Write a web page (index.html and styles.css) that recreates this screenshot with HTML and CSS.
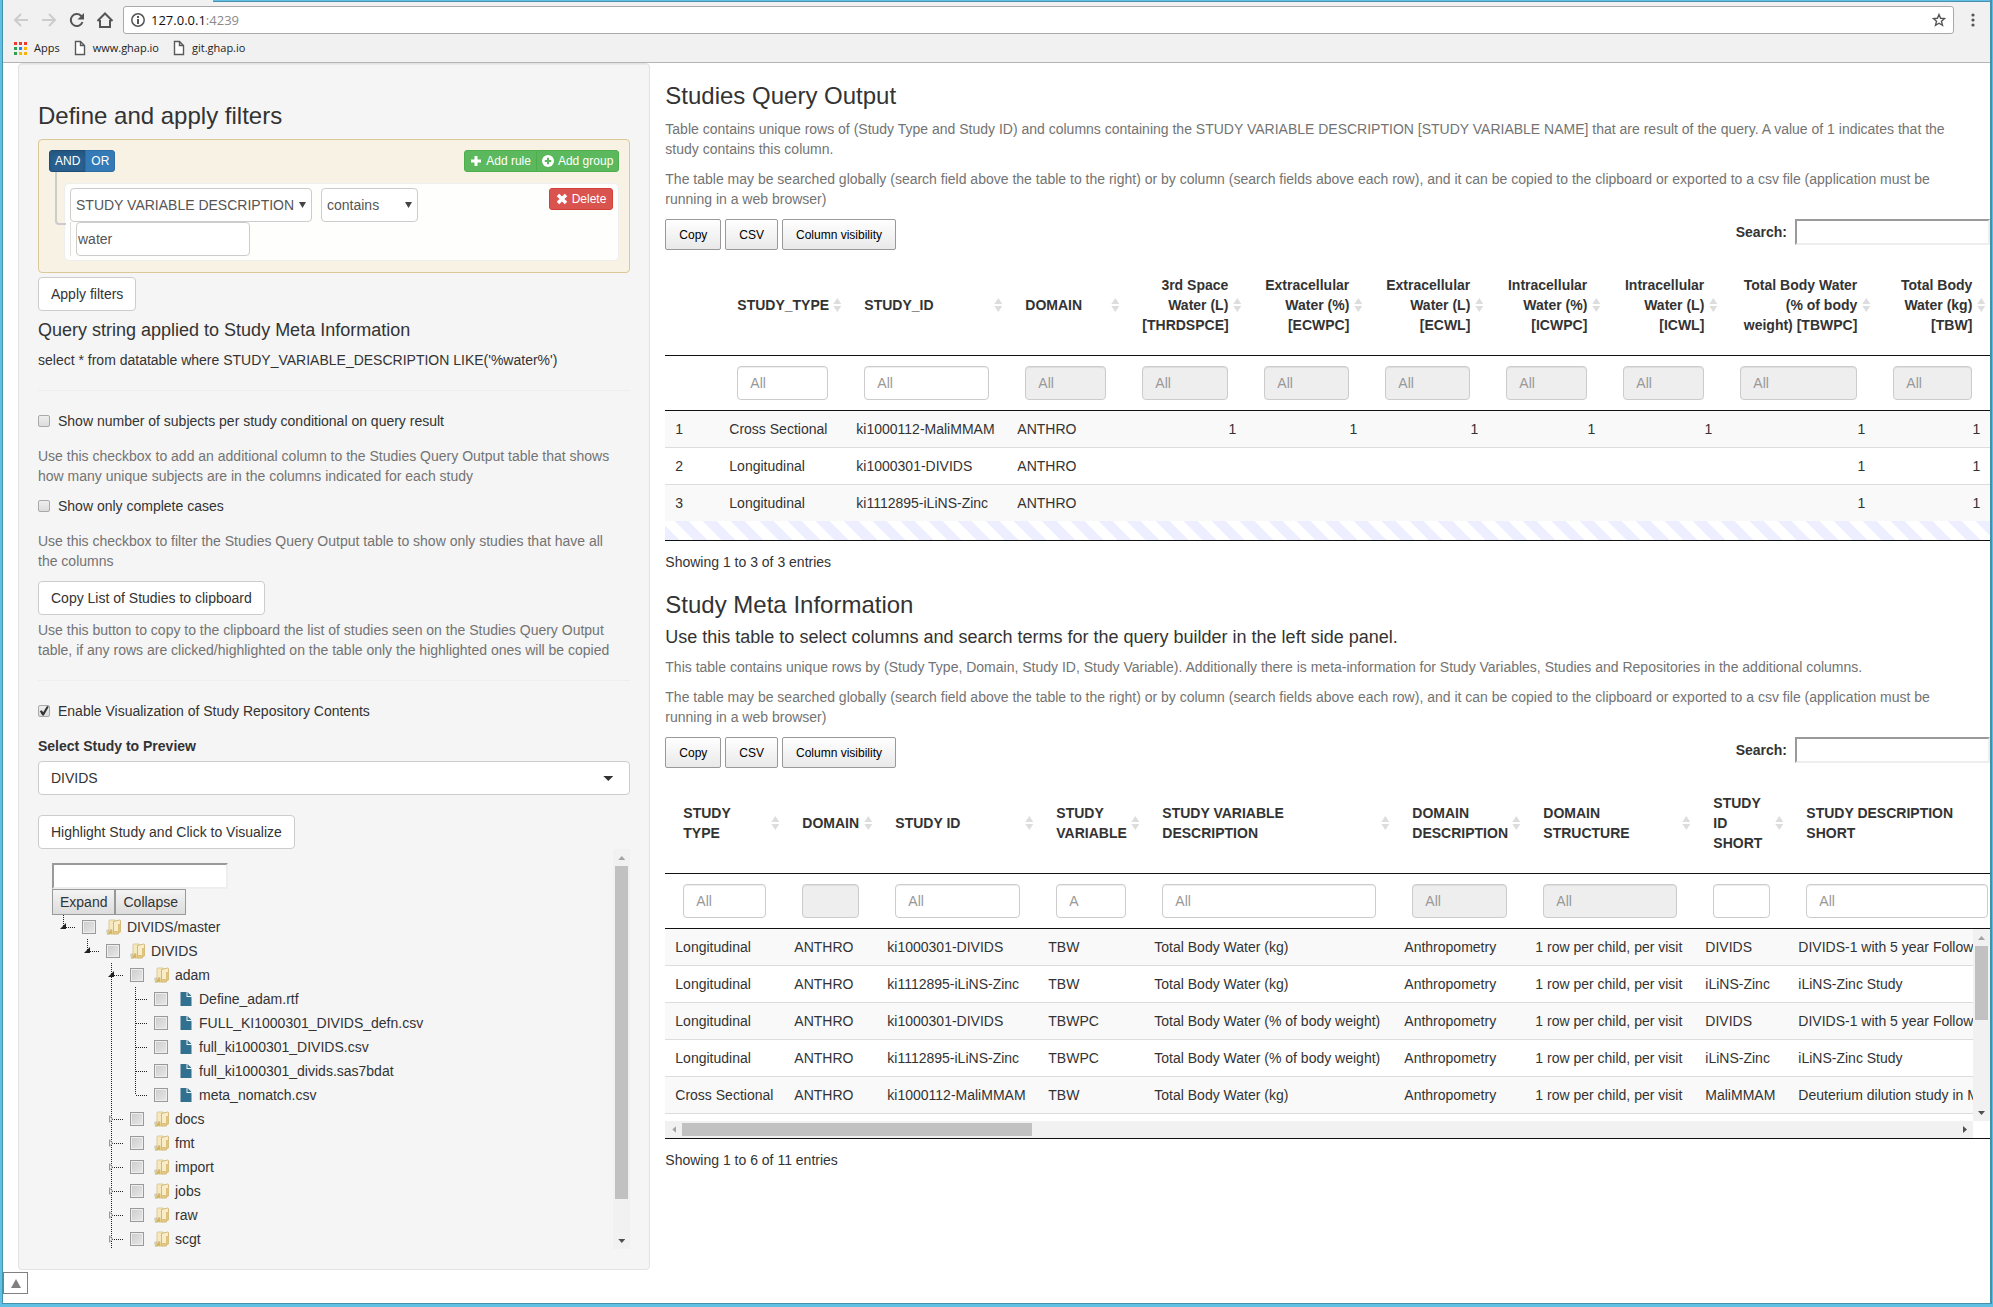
FILE: index.html
```html
<!DOCTYPE html>
<html lang="en">
<head>
<meta charset="utf-8">
<title>Studies Query</title>
<link rel="stylesheet" href="styles.css">
</head>
<body>
<svg class="defs" aria-hidden="true">
  <symbol id="folder" viewBox="0 0 16 16">
    <path d="M0 11l3-1v6H1z" fill="#d2cfc6"/>
    <path d="M3 2q0-1 1-1h5v14H2q1-2 1-4z" fill="#f6e9bd" stroke="#d2bb80" stroke-width=".7"/>
    <path d="M7.500 2.500l6-1.500q1 0 1 1v11l-2 1v1h-5z" fill="#f8edc8" stroke="#c9ac66" stroke-width=".8"/>
    <path d="M12 5h2.500v8l-2.500 1z" fill="#dfc37f"/>
    <path d="M7.500 12h5v3h-5z" fill="#e0c47c"/>
    <path d="M2 15l2.500-5 2 1v4z" fill="#d4b566"/>
  </symbol>
  <symbol id="file" viewBox="0 0 11 14">
    <path d="M0 0h6v5h5v9H0z" fill="#31708f"/>
    <path d="M7 0l4 4H7z" fill="#31708f"/>
  </symbol>
  <symbol id="page" viewBox="0 0 12 16">
    <path d="M1.500 1.500h5l4 4v9h-9zM6.500 1.500v4h4" fill="#fff" stroke="#5a5a5a" stroke-width="1.400"/>
  </symbol>
</svg>
<div class="window">
  <header class="chrome">
    <div class="tab-edge"></div>
    <div class="toolbar">
      <button class="nav" aria-label="Back"><svg width="16" height="16" viewBox="0 0 16 16" fill="none" stroke="#ccc" stroke-width="2"><path d="M15 8H2M8 2L2 8l6 6"/></svg></button>
      <button class="nav" aria-label="Forward"><svg width="16" height="16" viewBox="0 0 16 16" fill="none" stroke="#ccc" stroke-width="2"><path d="M1 8h13M8 2l6 6-6 6"/></svg></button>
      <button class="nav" aria-label="Reload"><svg width="16" height="16" viewBox="0 0 16 16" fill="none" stroke="#555" stroke-width="2"><path d="M13.500 10A6 6 0 1 1 12 3.700L13.500 5.500"/><path d="M15 1v6.500H8.500z" fill="#555" stroke="none"/></svg></button>
      <button class="nav" aria-label="Home"><svg width="18" height="16" viewBox="0 0 18 16" fill="none" stroke="#555" stroke-width="2"><path d="M1.500 9L9 1.500 16.500 9M4 8v7h10V8"/></svg></button>
      <div class="address">
        <svg width="14" height="14" viewBox="0 0 14 14" fill="none" stroke="#555" stroke-width="1.500"><circle cx="7" cy="7" r="6.200"/><path d="M7 6v5M7 3v2" stroke-width="2"/></svg>
        <span class="url">127.0.0.1<span class="port">:4239</span></span>
        <svg width="14" height="14" viewBox="0 0 14 14" fill="none" stroke="#555" stroke-width="1.400"><path d="M7 1.500l1.600 3.800 4 .3-3.100 2.700 1 4L7 10.200l-3.500 2.100 1-4L1.400 5.600l4-.3z"/></svg>
      </div>
      <button class="nav menu" aria-label="Menu"><svg width="4" height="14" viewBox="0 0 4 14" fill="#555"><circle cx="2" cy="2" r="1.600"/><circle cx="2" cy="7" r="1.600"/><circle cx="2" cy="12" r="1.600"/></svg></button>
    </div>
    <nav class="bookmarks">
      <a href="#"><svg width="13" height="13" viewBox="0 0 13 13"><path d="M0 0h3v3H0zM5 0h3v3H5zM10 0h3v3h-3z" fill="#f03a2e"/><path d="M0 5h3v3H0zM0 10h3v3H0z" fill="#2ba24c"/><path d="M5 5h3v3H5z" fill="#1b87f0"/><path d="M10 5h3v3h-3zM5 10h3v3H5zM10 10h3v3h-3z" fill="#fbb300"/></svg>Apps</a>
      <a href="#"><svg width="12" height="16"><use href="#page"/></svg>www.ghap.io</a>
      <a href="#"><svg width="12" height="16"><use href="#page"/></svg>git.ghap.io</a>
    </nav>
  </header>

  <div class="page">
    <aside class="side">
      <div class="well">
        <h3>Define and apply filters</h3>
        <div class="group">
          <div class="group-head">
            <div class="btn-group"><button class="xs primary active">AND</button><button class="xs primary">OR</button></div>
            <div class="btn-group">
              <button class="xs success"><svg width="12" height="12" viewBox="0 0 12 12" fill="#fff"><path d="M4.500 1h3v3.500H11v3H7.500V11h-3V7.500H1v-3h3.500z"/></svg>Add rule</button><button class="xs success"><svg width="12" height="12" viewBox="0 0 12 12"><circle cx="6" cy="6" r="6" fill="#fff"/><path d="M6 2.800v6.400M2.800 6h6.400" stroke="#5cb85c" stroke-width="2"/></svg>Add group</button>
            </div>
          </div>
          <div class="rules">
            <div class="rule">
              <div class="rule-fields">
                <div class="rule-selects">
                  <span class="pick pick-field"><select aria-label="Field"><option>STUDY VARIABLE DESCRIPTION</option></select></span>
                  <span class="pick pick-op"><select aria-label="Operator"><option>contains</option></select></span>
                </div>
                <div class="rule-value"><input type="text" value="water" aria-label="Value"></div>
              </div>
              <button class="xs danger"><svg width="12" height="12" viewBox="0 0 12 12"><path d="M2 2l8 8M10 2l-8 8" stroke="#fff" stroke-width="3.500"/></svg>Delete</button>
            </div>
          </div>
        </div>
        <button class="btn">Apply filters</button>
        <h4>Query string applied to Study Meta Information</h4>
        <div>select * from datatable where STUDY_VARIABLE_DESCRIPTION LIKE('%water%')</div>
        <hr>
        <label class="check"><input type="checkbox">Show number of subjects per study conditional on query result</label>
        <p class="help">Use this checkbox to add an additional column to the Studies Query Output table that shows how many unique subjects are in the columns indicated for each study</p>
        <label class="check"><input type="checkbox">Show only complete cases</label>
        <p class="help">Use this checkbox to filter the Studies Query Output table to show only studies that have all the columns</p>
        <button class="btn">Copy List of Studies to clipboard</button>
        <p class="help help-tight">Use this button to copy to the clipboard the list of studies seen on the Studies Query Output table, if any rows are clicked/highlighted on the table only the highlighted ones will be copied</p>
        <hr>
        <label class="check"><input type="checkbox" checked>Enable Visualization of Study Repository Contents</label>
        <label class="title" for="study">Select Study to Preview</label>
        <span class="pick pick-study"><select id="study"><option>DIVIDS</option></select></span>
        <button class="btn">Highlight Study and Click to Visualize</button>

        <div class="tree-box">
          <div class="tree-pane">
            <input class="tree-search" type="text" aria-label="Search tree">
            <div class="tree-buttons"><button>Expand</button><button>Collapse</button></div>
            <ul class="tree">
              <li class="open"><label><input type="checkbox"><svg width="16" height="16"><use href="#folder"/></svg>DIVIDS/master</label>
                <ul>
                  <li class="open"><label><input type="checkbox"><svg width="16" height="16"><use href="#folder"/></svg>DIVIDS</label>
                    <ul>
                      <li class="open"><label><input type="checkbox"><svg width="16" height="16"><use href="#folder"/></svg>adam</label>
                        <ul>
                          <li><label><input type="checkbox"><svg width="11" height="14"><use href="#file"/></svg>Define_adam.rtf</label></li>
                          <li><label><input type="checkbox"><svg width="11" height="14"><use href="#file"/></svg>FULL_KI1000301_DIVIDS_defn.csv</label></li>
                          <li><label><input type="checkbox"><svg width="11" height="14"><use href="#file"/></svg>full_ki1000301_DIVIDS.csv</label></li>
                          <li><label><input type="checkbox"><svg width="11" height="14"><use href="#file"/></svg>full_ki1000301_divids.sas7bdat</label></li>
                          <li><label><input type="checkbox"><svg width="11" height="14"><use href="#file"/></svg>meta_nomatch.csv</label></li>
                        </ul>
                      </li>
                      <li class="closed"><label><input type="checkbox"><svg width="16" height="16"><use href="#folder"/></svg>docs</label></li>
                      <li class="closed"><label><input type="checkbox"><svg width="16" height="16"><use href="#folder"/></svg>fmt</label></li>
                      <li class="closed"><label><input type="checkbox"><svg width="16" height="16"><use href="#folder"/></svg>import</label></li>
                      <li class="closed"><label><input type="checkbox"><svg width="16" height="16"><use href="#folder"/></svg>jobs</label></li>
                      <li class="closed"><label><input type="checkbox"><svg width="16" height="16"><use href="#folder"/></svg>raw</label></li>
                      <li class="closed more"><label><input type="checkbox"><svg width="16" height="16"><use href="#folder"/></svg>scgt</label></li>
                    </ul>
                  </li>
                </ul>
              </li>
            </ul>
          </div>
          <div class="vbar"><i class="up"></i><div class="track"><b class="thumb-tree"></b></div><i class="down"></i></div>
        </div>
      </div>
      <button class="to-top" aria-label="Back to top"><svg width="10" height="9" viewBox="0 0 10 9"><path d="M5 0l5 9H0z" fill="#808080"/></svg></button>
    </aside>

    <main class="main">
      <section>
        <h3>Studies Query Output</h3>
        <p class="help">Table contains unique rows of (Study Type and Study ID) and columns containing the STUDY VARIABLE DESCRIPTION [STUDY VARIABLE NAME] that are result of the query. A value of 1 indicates that the study contains this column.</p>
        <p class="help">The table may be searched globally (search field above the table to the right) or by column (search fields above each row), and it can be copied to the clipboard or exported to a csv file (application must be running in a web browser)</p>
        <div class="dt-bar">
          <button>Copy</button><button>CSV</button><button>Column visibility</button>
          <label>Search:<input type="search"></label>
        </div>
        <table class="dt studies">
          <thead>
            <tr><th></th><th class="sort">STUDY_TYPE</th><th class="sort">STUDY_ID</th><th class="sort">DOMAIN</th><th class="sort num">3rd Space Water (L) [THRDSPCE]</th><th class="sort num">Extracellular Water (%) [ECWPC]</th><th class="sort num">Extracellular Water (L) [ECWL]</th><th class="sort num">Intracellular Water (%) [ICWPC]</th><th class="sort num">Intracellular Water (L) [ICWL]</th><th class="sort num">Total Body Water (% of body weight) [TBWPC]</th><th class="sort num">Total Body Water (kg) [TBW]</th></tr>
            <tr class="filters"><td></td><td><input placeholder="All" aria-label="Filter"></td><td><input placeholder="All" aria-label="Filter"></td><td><input placeholder="All" aria-label="Filter" disabled></td><td><input placeholder="All" aria-label="Filter" disabled></td><td><input placeholder="All" aria-label="Filter" disabled></td><td><input placeholder="All" aria-label="Filter" disabled></td><td><input placeholder="All" aria-label="Filter" disabled></td><td><input placeholder="All" aria-label="Filter" disabled></td><td><input placeholder="All" aria-label="Filter" disabled></td><td><input placeholder="All" aria-label="Filter" disabled></td></tr>
          </thead>
          <tbody>
            <tr><td>1</td><td>Cross Sectional</td><td>ki1000112-MaliMMAM</td><td>ANTHRO</td><td class="num">1</td><td class="num">1</td><td class="num">1</td><td class="num">1</td><td class="num">1</td><td class="num">1</td><td class="num">1</td></tr>
            <tr><td>2</td><td>Longitudinal</td><td>ki1000301-DIVIDS</td><td>ANTHRO</td><td></td><td></td><td></td><td></td><td></td><td class="num">1</td><td class="num">1</td></tr>
            <tr><td>3</td><td>Longitudinal</td><td>ki1112895-iLiNS-Zinc</td><td>ANTHRO</td><td></td><td></td><td></td><td></td><td></td><td class="num">1</td><td class="num">1</td></tr>
          </tbody>
        </table>
        <div class="stripes"></div>
        <div class="info">Showing 1 to 3 of 3 entries</div>
      </section>

      <section>
        <h3>Study Meta Information</h3>
        <h4>Use this table to select columns and search terms for the query builder in the left side panel.</h4>
        <p class="help">This table contains unique rows by (Study Type, Domain, Study ID, Study Variable). Additionally there is meta-information for Study Variables, Studies and Repositories in the additional columns.</p>
        <p class="help">The table may be searched globally (search field above the table to the right) or by column (search fields above each row), and it can be copied to the clipboard or exported to a csv file (application must be running in a web browser)</p>
        <div class="dt-bar">
          <button>Copy</button><button>CSV</button><button>Column visibility</button>
          <label>Search:<input type="search"></label>
        </div>
        <div class="clip">
          <table class="dt meta">
            <thead>
              <tr><th class="sort">STUDY TYPE</th><th class="sort">DOMAIN</th><th class="sort">STUDY ID</th><th class="sort">STUDY VARIABLE</th><th class="sort">STUDY VARIABLE DESCRIPTION</th><th class="sort">DOMAIN DESCRIPTION</th><th class="sort">DOMAIN STRUCTURE</th><th class="sort">STUDY ID SHORT</th><th class="sort">STUDY DESCRIPTION SHORT</th></tr>
              <tr class="filters"><td><input placeholder="All" aria-label="Filter"></td><td><input aria-label="Filter" disabled></td><td><input placeholder="All" aria-label="Filter"></td><td><input placeholder="A" aria-label="Filter"></td><td><input placeholder="All" aria-label="Filter"></td><td><input placeholder="All" aria-label="Filter" disabled></td><td><input placeholder="All" aria-label="Filter" disabled></td><td><input aria-label="Filter"></td><td><input placeholder="All" aria-label="Filter"></td></tr>
            </thead>
          </table>
        </div>
        <div class="scroller">
          <div class="clip rows">
            <table class="dt meta">
              <tbody>
                <tr><td>Longitudinal</td><td>ANTHRO</td><td>ki1000301-DIVIDS</td><td>TBW</td><td>Total Body Water (kg)</td><td>Anthropometry</td><td>1 row per child, per visit</td><td>DIVIDS</td><td>DIVIDS-1 with 5 year Follow-up</td></tr>
                <tr><td>Longitudinal</td><td>ANTHRO</td><td>ki1112895-iLiNS-Zinc</td><td>TBW</td><td>Total Body Water (kg)</td><td>Anthropometry</td><td>1 row per child, per visit</td><td>iLiNS-Zinc</td><td>iLiNS-Zinc Study</td></tr>
                <tr><td>Longitudinal</td><td>ANTHRO</td><td>ki1000301-DIVIDS</td><td>TBWPC</td><td>Total Body Water (% of body weight)</td><td>Anthropometry</td><td>1 row per child, per visit</td><td>DIVIDS</td><td>DIVIDS-1 with 5 year Follow-up</td></tr>
                <tr><td>Longitudinal</td><td>ANTHRO</td><td>ki1112895-iLiNS-Zinc</td><td>TBWPC</td><td>Total Body Water (% of body weight)</td><td>Anthropometry</td><td>1 row per child, per visit</td><td>iLiNS-Zinc</td><td>iLiNS-Zinc Study</td></tr>
                <tr><td>Cross Sectional</td><td>ANTHRO</td><td>ki1000112-MaliMMAM</td><td>TBW</td><td>Total Body Water (kg)</td><td>Anthropometry</td><td>1 row per child, per visit</td><td>MaliMMAM</td><td>Deuterium dilution study in Mali</td></tr>
                <tr><td></td><td></td><td></td><td></td><td></td><td></td><td></td><td></td><td></td></tr>
              </tbody>
            </table>
          </div>
          <div class="vbar"><i class="up"></i><div class="track"><b class="thumb-rows"></b></div><i class="down"></i></div>
          <div class="hbar"><i class="left"></i><div class="track"><b class="thumb-cols"></b></div><i class="right"></i></div>
        </div>
        <div class="info">Showing 1 to 6 of 11 entries</div>
      </section>
    </main>
  </div>
</div>
</body>
</html>
```
FILE: styles.css
```css
* { box-sizing: border-box; }
body {
  margin: 0;
  background: #5fc0e3;
  color: #333;
  font: 14px/20px "Liberation Sans", Arial, sans-serif;
}
button, input, select { font: inherit; color: inherit; margin: 0; }
svg { display: block; flex: none; }
.defs { position: absolute; width: 0; height: 0; }
h3, h4 { font-weight: 400; margin: 20px 0 10px; }
h3 { font-size: 24px; line-height: 26px; }
h4 { font-size: 18px; line-height: 19px; margin: 10px 0; }
hr { border: 0; border-top: 1px solid #eee; margin: 20px 0; }
.help { margin: 0 0 10px; padding-right: 15px; color: #737373; }

.window {
  display: flex;
  flex-direction: column;
  min-height: calc(100vh - 3px);
  margin: 0 1px 0 2px;
  border: 1px solid #4590ab;
  border-right-width: 2px;
  border-top: 0;
  background: #fff;
}

/* browser bars */
.chrome {
  background: #f1f1f1;
  border-bottom: 1px solid #b4b4b4;
  font: 12px/16px "Open Sans", "Noto Sans", sans-serif;
  color: #222;
}
.tab-edge { height: 2px; margin-left: 210px; background: #5fc0e3; border-bottom: 1px solid #4e8fae; }
.toolbar { display: flex; align-items: center; padding: 4px 13px 2px 4px; height: 34px; }
.nav { display: flex; justify-content: center; width: 28px; padding: 0; border: 0; background: none; }
.menu { width: 8px; }
.address {
  display: flex;
  flex: 1;
  align-items: center;
  gap: 6px;
  height: 28px;
  margin: 0 15px 0 4px;
  padding: 0 7px;
  border: 1px solid #a9a9a9;
  border-radius: 3px;
  background: #fff;
  font-size: 13px;
}
.url { flex: 1; color: #111; }
.port { color: #8a8a8a; }
.bookmarks { display: flex; gap: 14px; height: 26px; padding: 0 11px 2px; align-items: center; font-size: 11px; }
.bookmarks a { display: flex; align-items: center; gap: 7px; color: inherit; text-decoration: none; }

.page { display: flex; align-items: flex-start; }
.side { flex: 0 0 33.333%; padding: 0 15px; min-width: 0; }
.main { flex: 1; min-width: 0; }
.well {
  padding: 19px 19px 20px;
  border: 1px solid #e3e3e3;
  border-radius: 4px;
  background: #f5f5f5;
  box-shadow: inset 0 1px 1px rgba(0, 0, 0, .05);
}
.well .help { padding-right: 8px; }

/* buttons */
.btn {
  display: block;
  height: 34px;
  padding: 6px 12px;
  border: 1px solid #ccc;
  border-radius: 4px;
  background: #fff;
}
.xs {
  display: flex;
  align-items: center;
  gap: 4px;
  height: 22px;
  padding: 0 5px;
  border: 1px solid;
  border-radius: 3px;
  color: #fff;
  font-size: 12px;
  white-space: nowrap;
}
.btn-group { display: flex; }
.btn-group .xs:first-child { border-radius: 3px 0 0 3px; }
.btn-group .xs:last-child { border-radius: 0 3px 3px 0; margin-left: -1px; }
.primary { background: #337ab7; border-color: #2e6da4; }
.primary.active { background: #286090; border-color: #204d74; box-shadow: inset 0 3px 5px rgba(0, 0, 0, .125); }
.success { background: #5cb85c; border-color: #4cae4c; }
.danger { padding: 0 6px; background: #d9534f; border-color: #d43f3a; }

/* query builder */
.group { padding: 10px 10px 11px; margin-bottom: 4px; border: 1px solid #dcc896; border-radius: 4px; background: #f7f2e4; }
.group-head { display: flex; justify-content: space-between; }
.rules { position: relative; padding: 11px 0 0 15px; }
.rules::before {
  content: "";
  position: absolute;
  left: 6px;
  top: 0;
  width: 9px;
  height: 51px;
  border: solid #ccc;
  border-width: 0 0 2px 2px;
  border-radius: 0 0 0 4px;
}
.rule {
  display: flex;
  justify-content: space-between;
  align-items: flex-start;
  padding: 4px 5px;
  border: 1px solid #eee;
  border-radius: 5px;
  background: #fefefc;
}
.rule-selects { display: flex; gap: 9px; }
.rule-value { padding-left: 5px; border-left: 1px solid #ddd; }
.rule-value input { display: block; width: 174px; height: 34px; padding: 1px; border: 1px solid #ccc; border-radius: 4px; background: #fff; color: #555; }

.pick { display: block; position: relative; }
.pick select {
  appearance: none;
  display: block;
  width: 100%;
  height: 34px;
  padding: 0 5px;
  border: 1px solid #ccc;
  border-radius: 4px;
  background: #fff;
  color: #555;
}
.pick::after {
  content: "";
  position: absolute;
  right: 6px;
  top: 14px;
  width: 7px;
  height: 6px;
  background: #444;
  clip-path: polygon(0 0, 100% 0, 50% 100%);
}
.pick-field { width: 242px; }
.pick-op { width: 97px; }
.pick-study { margin-bottom: 20px; }
.pick-study select { padding: 0 12px; color: #333; }
.pick-study::after { right: 17px; width: 10px; height: 5px; top: 15px; background: #333; }

/* form rows */
.check { display: flex; align-items: center; gap: 8px; margin-bottom: 15px; }
.check input {
  appearance: none;
  width: 12px;
  height: 12px;
  border: 1px solid #a9a9a9;
  border-radius: 2px;
  background: linear-gradient(#eee, #dcdcdc);
}
.check input:checked::after {
  content: "";
  display: block;
  height: 10px;
  background: #333;
  clip-path: polygon(8% 52%, 26% 42%, 42% 62%, 80% 0, 98% 8%, 48% 94%, 34% 94%);
}
.help + .check { margin-top: 10px; }
.help-tight { margin-top: 5px; }
.title { display: block; margin-bottom: 5px; font-weight: 700; }

/* repository tree */
.tree-box { display: flex; height: 400px; }
.tree-pane { flex: 1; overflow: hidden; padding: 14px 0 0 14px; }
.tree-search { display: block; width: 176px; height: 26px; border: 2px inset #eee; background: #fff; }
.tree-buttons { display: flex; }
.tree-buttons button {
  height: 26px;
  padding: 0 7px;
  border: 1px solid #999;
  background: linear-gradient(#f4f4f4, #dcdcdc);
}
.tree, .tree ul { list-style: none; margin: 0; padding: 0; }
.tree ul { padding-left: 24px; }
.tree li {
  position: relative;
  background: repeating-linear-gradient(#222 0 1px, transparent 1px 2px) 11px 0 / 1px 100% no-repeat;
}
.tree li:last-child { background-size: 1px 12px; }
.tree li.more { background-size: 1px 100%; }
.tree label {
  display: flex;
  align-items: center;
  height: 24px;
  padding-left: 30px;
  background: repeating-linear-gradient(90deg, #222 0 1px, transparent 1px 2px) 12px 12px / 12px 1px no-repeat;
}
.tree li::before { content: ""; position: absolute; }
.tree .open::before { left: 8px; top: 8px; width: 6px; height: 6px; background: #222; clip-path: polygon(100% 0, 100% 100%, 0 100%); }
.tree .closed::before { left: 9px; top: 8px; border: 4px solid transparent; border-left: 4px solid #999; border-right: 0; }
.tree .closed::after { content: ""; position: absolute; left: 10px; top: 10px; border: 2px solid transparent; border-left-color: #f5f5f5; border-right: 0; }
.tree label input {
  appearance: none;
  width: 14px;
  height: 14px;
  margin-right: 10px;
  border: 1px solid #999;
  background: linear-gradient(135deg, #ccc, #e8e8e8);
  box-shadow: inset 0 0 0 1px #eee;
}
.tree svg { width: 16px; margin-right: 5px; }

/* scroll bars */
.vbar { display: flex; flex-direction: column; align-items: center; width: 17px; background: #f1f1f1; }
.hbar { display: flex; align-items: center; height: 17px; background: #f1f1f1; }
.vbar i, .hbar i { flex: none; position: relative; width: 17px; height: 17px; }
.vbar i::after, .hbar i::after { content: ""; display: block; background: #505050; }
.vbar i::after { width: 7px; height: 4px; margin: 7px 5px; }
.hbar i::after { width: 4px; height: 7px; margin: 5px 7px; }
.up::after { clip-path: polygon(50% 0, 100% 100%, 0 100%); }
.down::after { clip-path: polygon(0 0, 100% 0, 50% 100%); }
.left::after { clip-path: polygon(100% 0, 100% 100%, 0 50%); }
.right::after { clip-path: polygon(0 0, 100% 50%, 0 100%); }
.vbar .up::after, .hbar .left::after { background: #a3a3a3; }
.track { flex: 1; }
.track b { display: block; background: #c1c1c1; }
.thumb-tree { width: 13px; height: 91%; }
.thumb-rows { width: 13px; height: 47%; }
.thumb-cols { width: 350px; height: 13px; }
.vbar .track { display: flex; flex-direction: column; }

.to-top { display: block; width: 25px; height: 22px; margin: 2px 0 0 -15px; padding: 0 7px; border: 1px solid #808080; background: #fff; }

/* data tables */
.dt-bar { display: flex; align-items: flex-start; gap: 4px; margin-bottom: 5px; }
.dt-bar button {
  height: 31px;
  padding: 0 13px;
  border: 1px solid #999;
  border-radius: 2px;
  background: linear-gradient(#fff, #e9e9e9);
  color: #000;
  font-size: 12px;
}
.dt-bar label { display: flex; align-items: center; gap: 8px; margin-left: auto; font-weight: 700; }
.dt-bar input { appearance: none; width: 195px; height: 26px; border: 2px inset #eee; background: #fff; }
.dt { width: 100%; table-layout: fixed; border-collapse: separate; border-spacing: 0; }
.dt th { position: relative; height: 101px; padding: 10px 18px; border-bottom: 1px solid #111; text-align: left; }
.dt .num { text-align: right; }
.sort::after {
  content: "";
  position: absolute;
  right: 5px;
  top: 43px;
  width: 8px;
  height: 14px;
  background: #ddd;
  clip-path: polygon(50% 0, 100% 6px, 0 6px, 0 8px, 100% 8px, 50% 100%, 0 8px, 0 6px);
}
.filters td { padding: 10px 18px; border-bottom: 1px solid #111; }
.filters input {
  display: block;
  width: 100%;
  height: 34px;
  padding: 6px 12px;
  border: 1px solid #ccc;
  border-radius: 4px;
  background: #fff;
  box-shadow: inset 0 1px 1px rgba(0, 0, 0, .075);
}
.filters input:disabled { background: #eee; }
.filters input::placeholder { color: #999; }
.dt tbody td { height: 37px; padding: 8px 10px; border-top: 1px solid #ddd; white-space: nowrap; }
.dt tbody tr:first-child td { height: 36px; border-top: 0; }
.dt tbody tr:nth-child(odd) { background: #f9f9f9; }

.studies th:nth-child(1) { width: 54px; }
.studies th:nth-child(2) { width: 127px; }
.studies th:nth-child(3) { width: 161px; }
.studies th:nth-child(4) { width: 117px; }
.studies th:nth-child(5) { width: 122px; }
.studies th:nth-child(6), .studies th:nth-child(7) { width: 121px; }
.studies th:nth-child(8), .studies th:nth-child(9) { width: 117px; }
.studies th:nth-child(10) { width: 153px; }
.studies th:nth-child(11) { width: 115px; }
.stripes {
  height: 20px;
  border-bottom: 1px solid #111;
  background: repeating-linear-gradient(45deg, #edeeff 0 10px, #fff 10px 20px);
}
.info { padding-top: 11px; }

.clip { overflow: hidden; }
.meta { width: 1341px; min-width: 100%; }
.meta tr > :nth-child(1) { width: 119px; }
.meta tr > :nth-child(2) { width: 93px; }
.meta tr > :nth-child(3) { width: 161px; }
.meta tr > :nth-child(4) { width: 106px; }
.meta tr > :nth-child(5) { width: 250px; }
.meta tr > :nth-child(6) { width: 131px; }
.meta tr > :nth-child(7) { width: 170px; }
.meta tr > :nth-child(8) { width: 93px; }
.meta tr > :nth-child(9) { width: 218px; }
.scroller { display: grid; grid-template-columns: minmax(0, 1fr) 17px; border-bottom: 1px solid #111; }
.rows { height: 192px; }
```
